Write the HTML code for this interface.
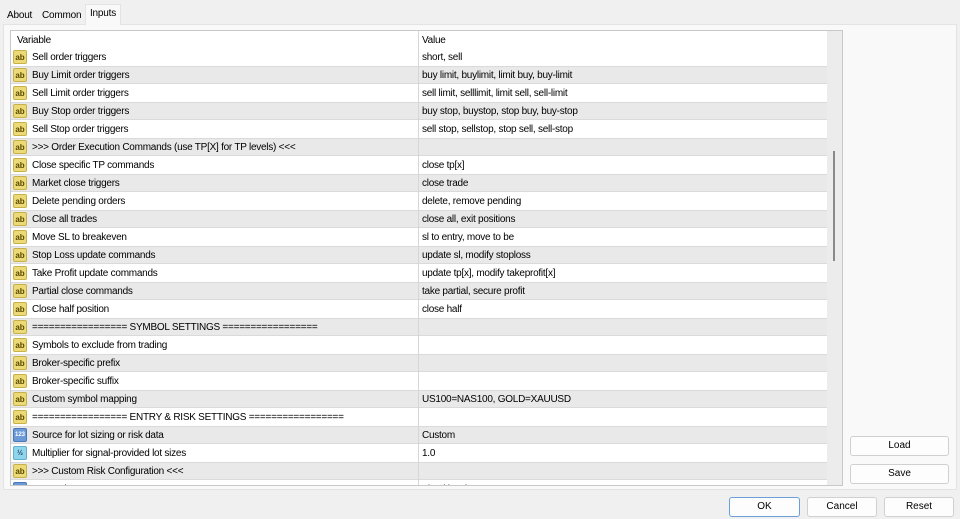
<!DOCTYPE html>
<html><head><style>
*{margin:0;padding:0;box-sizing:border-box}
body{width:960px;height:519px;background:#f0f0f0;font-family:"Liberation Sans",sans-serif;font-size:10px;color:#000;position:relative;overflow:hidden}
.tab{position:absolute;top:7px;height:18px;line-height:18px;font-size:10px;letter-spacing:-0.2px}
.panel{position:absolute;left:3px;top:24px;width:954px;height:466px;background:#f9f9f9;border:1px solid #e3e3e3}
.frame{position:absolute;left:10px;top:30px;width:833px;height:456px;border:1px solid #c8c8c8;background:#fff;overflow:hidden;letter-spacing:-0.25px}
.hdr{position:absolute;left:0;top:0;width:816px;height:18px;line-height:20px;background:#fff}
.row{position:absolute;left:0;width:816px;height:18px;line-height:19px}
.g{background:#e9e9e9;border-top:1px solid #dadada;border-bottom:1px solid #dadada}
.g span{line-height:17px}
.v{position:absolute;left:21px}
.val{position:absolute;left:411px}
.div{position:absolute;left:407px;top:0;width:1px;height:456px;background:#d6d6d6}
.ic{position:absolute;left:2px;top:2px;width:14px;height:14px;border-radius:2px;font-size:8px;line-height:13px;text-align:center;font-weight:bold;letter-spacing:0}
.g .ic{top:1px}
.ab{background:#ecd977;border:1px solid #c9b14a;color:#5a4a00}
.n{background:#6c9ad6;border:1px solid #4b78b8;color:#fff;font-size:6px}
.h{background:#8fd6ec;border:1px solid #5fb0cc;color:#246;font-size:7px}
.sb{position:absolute;left:816px;top:0;width:16px;height:456px;background:#ececec}
.th{position:absolute;left:822px;top:120px;width:2px;height:110px;background:#8a8a8a}
.btn{position:absolute;height:20px;background:#fdfdfd;border:1px solid #d0d0d0;border-radius:3px;text-align:center;line-height:18px;font-size:10px}
</style></head><body>
<div class="tab" style="left:7px">About</div>
<div class="tab" style="left:42px">Common</div>
<div class="tab" style="left:85px;top:4px;width:36px;height:21px;background:#f9f9f9;border:1px solid #e3e3e3;border-bottom:none;line-height:17px;text-align:center;z-index:2">Inputs</div>
<div class="panel"></div>
<div class="frame">
<div class="hdr"><span class="v" style="left:6px">Variable</span><span class="val">Value</span></div>
<div id="rows"></div>
<div class="div"></div>
<div class="sb"></div><div class="th"></div>
</div>
<div class="btn" style="left:850px;top:436px;width:99px">Load</div>
<div class="btn" style="left:850px;top:464px;width:99px">Save</div>
<div class="btn" style="left:729px;top:497px;width:71px;border-color:#6aa0d8">OK</div>
<div class="btn" style="left:807px;top:497px;width:70px">Cancel</div>
<div class="btn" style="left:884px;top:497px;width:70px">Reset</div>
<script>
var R=[["Sell order triggers","short, sell"],["Buy Limit order triggers","buy limit, buylimit, limit buy, buy-limit"],["Sell Limit order triggers","sell limit, selllimit, limit sell, sell-limit"],["Buy Stop order triggers","buy stop, buystop, stop buy, buy-stop"],["Sell Stop order triggers","sell stop, sellstop, stop sell, sell-stop"],[">>> Order Execution Commands (use TP[X] for TP levels) <<<",""],["Close specific TP commands","close tp[x]"],["Market close triggers","close trade"],["Delete pending orders","delete, remove pending"],["Close all trades","close all, exit positions"],["Move SL to breakeven","sl to entry, move to be"],["Stop Loss update commands","update sl, modify stoploss"],["Take Profit update commands","update tp[x], modify takeprofit[x]"],["Partial close commands","take partial, secure profit"],["Close half position","close half"],["================= SYMBOL SETTINGS =================",""],["Symbols to exclude from trading",""],["Broker-specific prefix",""],["Broker-specific suffix",""],["Custom symbol mapping","US100=NAS100, GOLD=XAUUSD"],["================= ENTRY & RISK SETTINGS =================",""],["Source for lot sizing or risk data","Custom","n"],["Multiplier for signal-provided lot sizes","1.0","h"],[">>> Custom Risk Configuration <<<",""],["Lot mode","Fixed lot size","n"]];
var h="";R.forEach(function(r,i){var t=r[2]||"ab";var lbl=t=="ab"?"ab":t=="n"?"123":"½";h+='<div class="row'+(i%2?' g':'')+'" style="top:'+(17+i*18)+'px"><div class="ic '+t+'">'+lbl+'</div><span class="v">'+r[0].replace(/</g,"&lt;").replace(/>/g,"&gt;")+'</span><span class="val">'+r[1]+'</span></div>';});
document.getElementById("rows").innerHTML=h;
</script>
</body></html>
